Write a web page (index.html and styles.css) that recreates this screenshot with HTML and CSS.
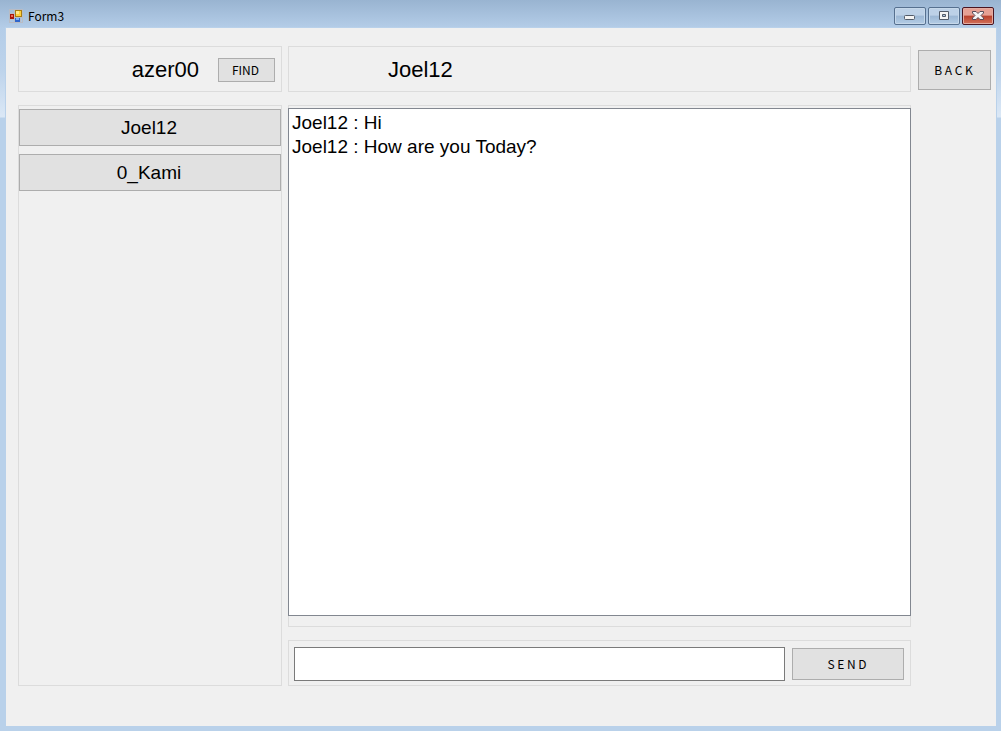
FILE: index.html
```html
<!DOCTYPE html>
<html lang="en">
<head>
<meta charset="utf-8">
<title>Form3</title>
<link rel="stylesheet" href="styles.css">
</head>
<body>
<div class="window">
  <header class="titlebar">
    <svg class="app-icon" width="14" height="14" viewBox="0 0 14 14" aria-hidden="true">
      <rect x="0.5" y="0.5" width="13" height="13" fill="none" stroke="#b9bcc4"/>
      <path d="M5.500 1v12M1 4.500h4M1 10.500h5M6 8.500h7M11.500 9v4" fill="none" stroke="#b9bcc4"/>
      <rect x="6" y="1" width="7" height="7" fill="#a87d12"/>
      <rect x="7" y="2" width="5" height="5" fill="#ffcf3c"/>
      <rect x="7" y="2" width="3" height="3" fill="#ffe78c"/>
      <rect x="1" y="5" width="4" height="5" fill="#a81408"/>
      <rect x="2" y="6" width="2" height="2" fill="#ec6a58"/>
      <rect x="6" y="9" width="5" height="4" fill="#2f66cc"/>
      <rect x="7" y="9" width="3" height="2" fill="#7fb2f4"/>
    </svg>
    <h1 class="title">Form3</h1>
    <div class="controls">
      <button class="control" type="button" aria-label="Minimize">
        <svg width="12" height="12" viewBox="0 0 12 12"><rect x="0.5" y="5.5" width="10" height="4" rx="1" fill="#f4f4f4" stroke="#525b68"/></svg>
      </button>
      <button class="control" type="button" aria-label="Maximize">
        <svg width="12" height="12" viewBox="0 0 12 12"><path d="M1.500 1.500h9v8h-9zM4.500 4.500h3v2h-3z" fill="#f4f4f4" fill-rule="evenodd" stroke="#525b68" stroke-linejoin="round"/></svg>
      </button>
      <button class="control close" type="button" aria-label="Close">
        <svg width="12" height="12" viewBox="0 0 12 12"><path d="M.5 1.500h3.500l2 2 2-2h3.500v1.500L9 5.500l2.500 2.500v1.500H8l-2-2-2 2H.5V8L3 5.500.5 3z" fill="#f4f4f4" stroke="#564b58" stroke-linejoin="round"/></svg>
      </button>
    </div>
  </header>
  <main class="client">
    <aside class="sidebar">
      <section class="panel heading user">
        <span class="name">azer00</span>
        <button class="button find" type="button">FIND</button>
      </section>
      <nav class="panel contacts">
        <button class="button contact" type="button">Joel12</button>
        <button class="button contact" type="button">0_Kami</button>
      </nav>
    </aside>
    <div class="chat">
      <section class="panel heading peer"><h2 class="name">Joel12</h2></section>
      <section class="panel history">
        <div class="messages">
          <p class="message">Joel12 : Hi</p>
          <p class="message">Joel12 : How are you Today?</p>
        </div>
      </section>
      <form class="panel composer">
        <input class="entry" type="text" aria-label="Message">
        <button class="button send" type="button">S E N D</button>
      </form>
    </div>
    <button class="button back" type="button">B A C K</button>
  </main>
</div>
</body>
</html>
```
FILE: styles.css
```css
* { box-sizing: border-box; }
body { margin: 0; color: #000; font-family: "Liberation Sans", Arial, sans-serif; }
h1, h2, p { margin: 0; font-weight: normal; }
button, input { font: inherit; color: inherit; border-radius: 0; margin: 0; padding: 0; }

.window {
  display: flex;
  flex-direction: column;
  min-height: 100vh;
  padding: 0 5px 5px 6px;
  background: linear-gradient(#99b4d1 0, #b4cde8 28px, #bdd3eb 70px, #dbe8f6 117px, #b9d1ea 118px);
}
.titlebar { display: flex; height: 28px; padding-left: 3px; padding-right: 2px; }
.app-icon { margin-top: 9px; }
.title {
  flex: 1;
  margin-left: 5px;
  font: 12px/18px "Noto Sans CJK SC", sans-serif;
  padding-top: 7px;
}
.controls { display: flex; gap: 2px; padding-top: 7px; }
.control {
  display: flex;
  align-items: center;
  justify-content: center;
  width: 32px;
  height: 18px;
  border: 1px solid #56708f;
  border-radius: 2px;
  background: linear-gradient(#bdd1e7 0 45%, #9cb7d4 50%, #b4cde6);
  box-shadow: inset 0 0 0 1px #c6d8ea;
}
.close {
  border-color: #4a1420;
  background: linear-gradient(#e5a094 0 45%, #b8402c 50%, #d3715a);
  box-shadow: inset 0 0 0 1px #e3aca2;
}

.client {
  flex: 1;
  display: flex;
  align-items: stretch;
  padding: 18px 5px 40px 12px;
  background: #f0f0f0;
  box-shadow: 0 0 0 1px #b9d1ea;
}
.panel { border: 1px solid #dcdcdc; }
.sidebar { display: flex; flex-direction: column; gap: 13px; width: 264px; margin-right: 6px; }
.chat { flex: 1; display: flex; flex-direction: column; gap: 13px; min-width: 0; margin-right: 7px; }
.heading { display: flex; align-items: center; height: 46px; padding-top: 2px; }
.name { font-size: 22px; line-height: 26px; }
.user { justify-content: flex-end; gap: 19px; padding-right: 6px; }
.peer { padding-left: 99px; }

.button {
  padding: 0 2px 1px 0;
  border: 1px solid #adadad;
  background: #e1e1e1;
  font: 12px/16px "Noto Sans CJK SC", sans-serif;
}
.find { width: 57px; height: 24px; }
.back { width: 73px; height: 40px; margin-top: 4px; }
.send { width: 112px; height: 32px; }

.contacts { flex: 1; display: flex; flex-direction: column; gap: 8px; padding-top: 3px; }
.contact { height: 37px; padding: 0 2px 0 0; font: 19px/24px "Liberation Sans", Arial, sans-serif; }

.history { flex: 1; display: flex; padding: 2px 0 10px; }
.messages {
  flex: 1;
  margin: 0 -1px;
  padding: 2px 3px;
  border: 1px solid #828790;
  background: #fff;
}
.message { font-size: 19px; line-height: 24px; }

.composer { display: flex; align-items: center; gap: 7px; height: 46px; padding: 2px 6px 0 5px; }
.entry { flex: 1; min-width: 0; height: 34px; padding: 0 4px; border: 1px solid #7a7a7a; background: #fff; font-size: 19px; }
```
